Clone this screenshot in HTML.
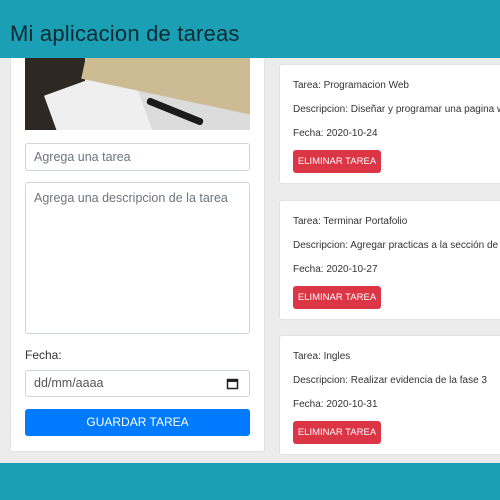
<!DOCTYPE html>
<html><head><meta charset="utf-8"><style>
*{box-sizing:border-box;margin:0;padding:0}
body{width:500px;height:500px;overflow:hidden;background:#ececec;font-family:"Liberation Sans",sans-serif;position:relative}
.hdr{position:absolute;left:0;top:0;width:500px;height:58px;background:#1a9fb5;}
.hdr span{position:absolute;left:10px;top:21px;font-size:22px;color:#0c2a33;letter-spacing:.2px}
.ftr{position:absolute;left:0;top:463px;width:500px;height:37px;background:#1a9fb5}
.left{position:absolute;left:10px;top:40px;width:255px;height:412px;background:#fff;border:1px solid #e2e2e2;border-radius:3px}
.img{position:absolute;left:25px;top:58px;width:225px;height:72px;overflow:hidden;background:#dcdcdc}
.inp{position:absolute;left:25px;width:225px;background:#fff;border:1px solid #ced4da;border-radius:3px;color:#6c757d;font-size:12.5px;padding-left:8px}
.btn{position:absolute;left:25px;top:409px;width:225px;height:27px;background:#007bff;border-radius:3px;color:#fff;font-size:12px;text-align:center;line-height:27px}
.card{position:absolute;left:279px;width:221px;height:120px;background:#fff;border:1px solid #e2e2e2;border-right:none;border-radius:3px 0 0 3px;font-size:10px;color:#333;overflow:hidden}
.card p{position:absolute;left:13px;white-space:nowrap}
.del{position:absolute;left:13px;width:88px;height:23px;background:#dc3545;border-radius:3px;color:#fff;font-size:9.5px;text-align:center;line-height:23px}
</style></head><body>
<div class="left"></div>
<div class="img">
 <div style="position:absolute;left:0;top:0;width:60px;height:72px;background:#2e2822"></div>
 <div style="position:absolute;left:30px;top:20px;width:90px;height:80px;background:#efefef;transform:rotate(-20deg)"></div>
 <div style="position:absolute;left:60px;top:-15px;width:180px;height:55px;background:#cdbb94;transform:rotate(12deg)"></div>
 <div style="position:absolute;left:120px;top:50px;width:60px;height:7px;background:#1a1a1a;transform:rotate(22deg);border-radius:3px"></div>
</div>
<div class="inp" style="top:143px;height:28px;line-height:26px">Agrega una tarea</div>
<div class="inp" style="top:182px;height:152px;padding-top:8px">Agrega una descripcion de la tarea</div>
<div style="position:absolute;left:25px;top:348px;font-size:12px;color:#333">Fecha:</div>
<div class="inp" style="top:370px;height:27px;line-height:25px;color:#555;background:#fff">dd/mm/aaaa
<svg style="position:absolute;right:10px;top:6px" width="13" height="13" viewBox="0 0 13 13"><rect x="1.5" y="2.5" width="10" height="9" fill="none" stroke="#222" stroke-width="1.5"/><rect x="1.5" y="2.5" width="10" height="2.5" fill="#222"/></svg></div>
<div class="btn">GUARDAR TAREA</div>

<div class="card" style="top:64px"><p style="top:15px">Tarea: Programacion Web</p><p style="top:39px">Descripcion: Diseñar y programar una pagina web</p><p style="top:63px">Fecha: 2020-10-24</p><div class="del" style="top:85px">ELIMINAR TAREA</div></div>
<div class="card" style="top:200px"><p style="top:15px">Tarea: Terminar Portafolio</p><p style="top:39px">Descripcion: Agregar practicas a la sección de trabajos</p><p style="top:63px">Fecha: 2020-10-27</p><div class="del" style="top:85px">ELIMINAR TAREA</div></div>
<div class="card" style="top:335px"><p style="top:15px">Tarea: Ingles</p><p style="top:39px">Descripcion: Realizar evidencia de la fase 3</p><p style="top:63px">Fecha: 2020-10-31</p><div class="del" style="top:85px">ELIMINAR TAREA</div></div>

<div class="hdr"><span>Mi aplicacion de tareas</span></div>
<div class="ftr"></div>
</body></html>
